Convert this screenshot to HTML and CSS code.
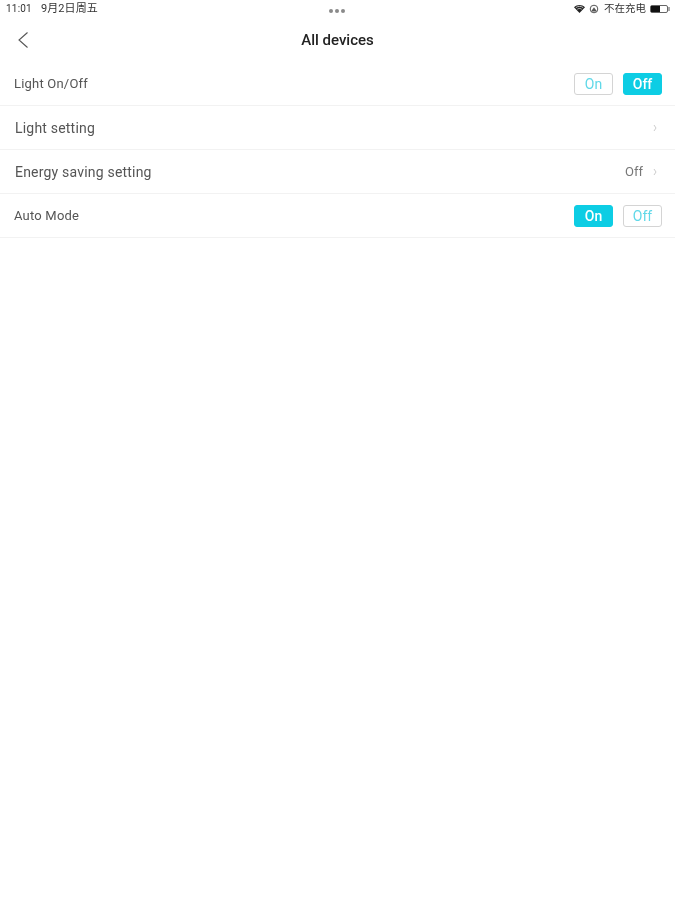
FILE: index.html
```html
<!DOCTYPE html>
<html lang="en">
<head>
<meta charset="utf-8">
<title>All devices</title>
<link rel="stylesheet" href="styles.css">
</head>
<body>
<div class="status">
  <div class="status-left"><span>11:01</span><span class="date">9月2日周五</span></div>
  <div class="dots"><i></i><i></i><i></i></div>
  <div class="status-right">
    <svg class="wifi" width="11" height="8" viewBox="0 0 11 8"><path d="M5.500 8 0 2.200C3.200-.7 7.800-.7 11 2.200Z" fill="#222"/><path d="M1.800 2.600C3.900 1 7.100 1 9.200 2.600M3.300 4.200C4.600 3.300 6.400 3.300 7.700 4.200" stroke="#fff" stroke-width=".7" fill="none"/></svg>
    <svg class="lock" width="10" height="10" viewBox="0 0 10 10"><circle cx="5" cy="5" r="3.800" fill="none" stroke="#555" stroke-width="1"/><path d="M2 7.500 5 3.200 8 7.500Z" fill="#555"/></svg>
    <span class="charge">不在充电</span>
    <div class="battery"><div class="battery-level"></div></div><div class="battery-tip"></div>
  </div>
</div>
<header class="nav">
  <svg class="back" width="12" height="18" viewBox="0 0 12 18"><path d="M10.500 1.500 2 9l8.500 7.500" fill="none" stroke="#555" stroke-width="1.100"/></svg>
  <h1>All devices</h1>
</header>
<main>
  <div class="row">
    <span class="label label-tight">Light On/Off</span>
    <div class="toggle"><button class="btn">On</button><button class="btn active">Off</button></div>
  </div>
  <div class="row">
    <span class="label">Light setting</span>
    <div class="value"><svg class="chev" width="4" height="8" viewBox="0 0 4 8"><path d="M1 1l2 3-2 3" fill="none" stroke="#ccc"/></svg></div>
  </div>
  <div class="row">
    <span class="label">Energy saving setting</span>
    <div class="value"><span>Off</span><svg class="chev" width="4" height="8" viewBox="0 0 4 8"><path d="M1 1l2 3-2 3" fill="none" stroke="#ccc"/></svg></div>
  </div>
  <div class="row">
    <span class="label label-tight">Auto Mode</span>
    <div class="toggle"><button class="btn active">On</button><button class="btn">Off</button></div>
  </div>
</main>
</body>
</html>
```
FILE: styles.css
```css
* { box-sizing: border-box; }
html, body { margin: 0; height: 100%; background: #fff; }
body { font-family: "Roboto", "Noto Sans CJK SC", sans-serif; color: #333; overflow: hidden; filter: blur(.45px); }
.status { height: 18px; display: flex; align-items: center; justify-content: space-between; padding: 0 5px 0 6px; position: relative; font-size: 10px; color: #333; }
.status-left { display: flex; align-items: center; gap: 9px; letter-spacing: .2px; line-height: 18px; }
.date { font-size: 11px; letter-spacing: .1px; }
.dots { position: absolute; left: 329px; top: 9px; display: flex; gap: 2px; }
.dots i { width: 4px; height: 4px; border-radius: 50%; background: #8a8a8a; }
.status-right { display: flex; align-items: center; line-height: 16px; }
.wifi { margin-right: 4px; }
.lock { margin-right: 5px; }
.charge { margin-right: 4px; font-size: 10.500px; }
.battery { width: 18px; height: 8px; border: 1px solid #666; border-radius: 2px; }
.battery-level { width: 9px; height: 100%; background: #111; }
.battery-tip { width: 2px; height: 4px; background: #aaa; }
.nav { height: 44px; display: flex; align-items: center; justify-content: center; position: relative; }
.nav h1 { margin: 0; font-size: 15px; font-weight: 500; color: #222; }
.back { position: absolute; left: 17px; top: 13px; }
.row { height: 44px; display: flex; align-items: center; justify-content: space-between; padding: 0 13px 0 15px; border-bottom: 1px solid #f2f2f2; }
.label { font-size: 14px; color: #555; letter-spacing: .2px; }
.label-tight { margin-left: -1px; font-size: 13px; }
.toggle { display: flex; gap: 10px; }
.btn { width: 39px; height: 22px; padding: 0; border: 1px solid #d4d4d4; border-radius: 3px; background: #fff; color: #5fd8e8; font: 400 14px "Roboto", sans-serif; }
.btn.active { background: #0dcde4; border-color: #0dcde4; color: #fff; font-weight: 500; }
.value { display: flex; align-items: center; gap: 10px; font-size: 13px; color: #777; padding-right: 5px; }
```
